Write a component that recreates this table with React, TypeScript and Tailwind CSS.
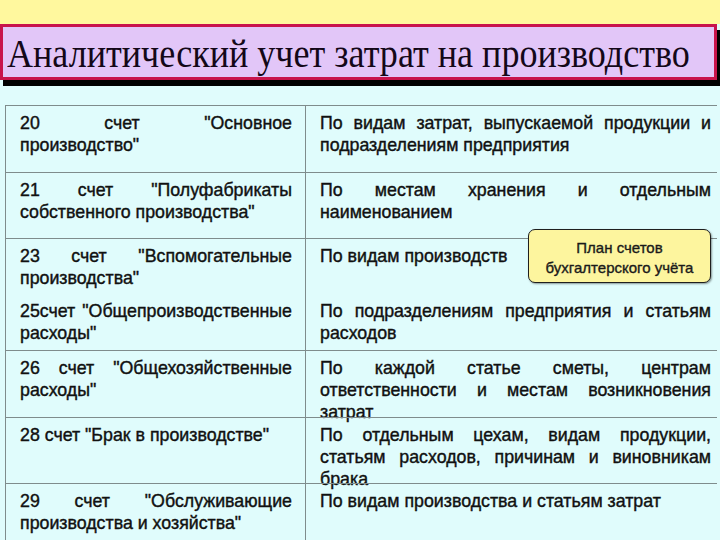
import React from "react";

type Row = {
  h: string;
  border: boolean;
  left: string[];
  right: string[];
};

const ROWS: Row[] = [
  {
    h: "h-[67px]",
    border: true,
    left: ['20 счет "Основное', 'производство"'],
    right: ["По видам затрат, выпускаемой продукции и", "подразделениям предприятия"],
  },
  {
    h: "h-[66px]",
    border: true,
    left: ['21 счет "Полуфабрикаты', 'собственного производства"'],
    right: ["По местам хранения и отдельным", "наименованием"],
  },
  {
    h: "h-[56px]",
    border: true,
    left: ['23 счет "Вспомогательные', 'производства"'],
    right: ["По видам производств"],
  },
  {
    h: "h-[56px]",
    border: false,
    left: ['25счет "Общепроизводственные', 'расходы"'],
    right: ["По подразделениям предприятия и статьям", "расходов"],
  },
  {
    h: "h-[67px]",
    border: true,
    left: ['26 счет "Общехозяйственные', 'расходы"'],
    right: ["По каждой статье сметы, центрам", "ответственности и местам возникновения", "затрат"],
  },
  {
    h: "h-[66px]",
    border: true,
    left: ['28 счет "Брак в производстве"'],
    right: ["По отдельным цехам, видам продукции,", "статьям расходов, причинам и виновникам", "брака"],
  },
  {
    h: "h-[70px]",
    border: true,
    left: ['29 счет "Обслуживающие', 'производства и хозяйства"'],
    right: ["По видам производства и статьям затрат"],
  },
];

// every line but the last one is stretched to the cell width
const Lines = ({ lines }: { lines: string[] }) => (
  <>
    {lines.map((line, i) => (
      <div
        key={i}
        className={
          i < lines.length - 1
            ? "whitespace-nowrap text-justify [text-align-last:justify]"
            : "whitespace-nowrap"
        }
      >
        {line}
      </div>
    ))}
  </>
);

export default function App() {
  return (
    <div className="w-[720px] h-[540px] overflow-hidden bg-[#e0fcfc]">
      <div className="h-[24px] bg-[#fff89e]" />
      <div className="w-[717px] h-[56px] border-[3px] border-[#c8144c] bg-[#e2c6f8] shadow-[3px_6px_0_#000] flex items-center pl-[4px] overflow-hidden">
        <h1 className="origin-left scale-x-[0.88] font-['Liberation_Serif','Times_New_Roman',serif] text-[41px] leading-none text-[#140818] whitespace-nowrap pt-[3px]">
          Аналитический учет затрат на производство
        </h1>
      </div>

      <div className="relative mt-[25px] ml-[5px] w-[712px] font-['Liberation_Sans',Arial,sans-serif] text-[17.8px] leading-[22px] text-[#111] [-webkit-text-stroke:0.4px_#111]">
        {ROWS.map((row, i) => (
          <div
            key={i}
            className={`relative flex ${row.h} ${
              row.border ? "border-t border-[#7f8c8c]" : ""
            }`}
          >
            <div className="w-[301px] shrink-0 border-l border-r border-[#7f8c8c] pl-[14px] pr-[13px] pt-[6px]">
              <Lines lines={row.left} />
            </div>
            <div className="flex-1 pl-[14px] pr-[6px] pt-[6px]">
              <Lines lines={row.right} />
            </div>
          </div>
        ))}

        <div className="absolute left-[523px] top-[124px] w-[183px] h-[54px] z-10 rounded-[7px] border border-[#1f1f1f] bg-[#fdf59e] shadow-[1px_1px_2px_rgba(0,0,0,0.4)] pt-[8px] text-center text-[15px] leading-[20px] text-[#1a1a1a] [-webkit-text-stroke:0.35px_#1a1a1a]">
          <div>План счетов</div>
          <div>бухгалтерского учёта</div>
        </div>
      </div>
    </div>
  );
}
